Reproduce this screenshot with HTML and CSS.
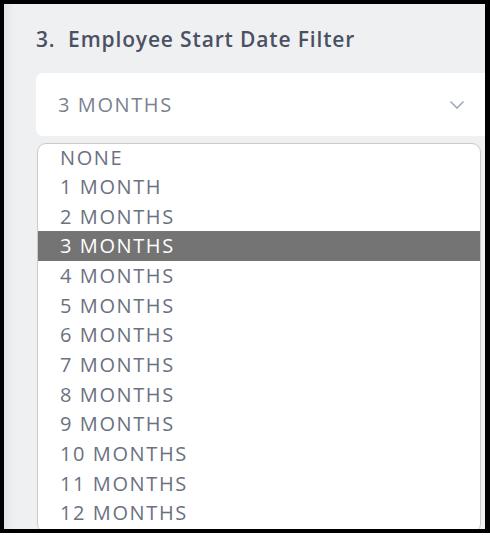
FILE: index.html
```html
<!DOCTYPE html>
<html>
<head>
<meta charset="utf-8">
<link rel="stylesheet" href="styles.css">
</head>
<body>
<div class="frame">
  <div class="panel">
    <h2 class="title">3.&nbsp; Employee Start Date Filter</h2>
    <div class="select">
      <span class="select-value">3 MONTHS</span>
      <svg class="chevron" width="16" height="10" viewBox="0 0 16 10"><path d="M1.5 1.5 L8 8 L14.5 1.5" fill="none" stroke="#a4abb8" stroke-width="1.6"/></svg>
    </div>
    <ul class="list">
      <li class="opt">NONE</li>
      <li class="opt">1 MONTH</li>
      <li class="opt">2 MONTHS</li>
      <li class="opt sel">3 MONTHS</li>
      <li class="opt">4 MONTHS</li>
      <li class="opt">5 MONTHS</li>
      <li class="opt">6 MONTHS</li>
      <li class="opt">7 MONTHS</li>
      <li class="opt">8 MONTHS</li>
      <li class="opt">9 MONTHS</li>
      <li class="opt">10 MONTHS</li>
      <li class="opt">11 MONTHS</li>
      <li class="opt">12 MONTHS</li>
    </ul>
  </div>
</div>
</body>
</html>
```

FILE: styles.css
```css
html, body {
  margin: 0;
  padding: 0;
  background: #ffffff;
}
.frame {
  box-sizing: border-box;
  width: 490px;
  height: 533px;
  border-style: solid;
  border-color: #000;
  border-width: 4px 5px 4px 4px;
  overflow: hidden;
}
.panel {
  height: 100%;
  background: linear-gradient(to right, #e2e3e5 0px, #eff0f2 10px);
  padding: 0 0 0 32px;
  box-sizing: border-box;
  font-family: "Open Sans", "Liberation Sans", sans-serif;
}
.title {
  margin: 0;
  padding-top: 22px;
  height: 46px;
  box-sizing: border-box;
  font-size: 21px;
  font-weight: 600;
  line-height: 26px;
  color: #4b5162;
  letter-spacing: 0.85px;
}
.select {
  margin-top: 23px;
  height: 63px;
  background: #fff;
  border-radius: 7px 0 0 7px;
  display: flex;
  align-items: center;
  justify-content: space-between;
  padding: 0 20px 0 22px;
  box-sizing: border-box;
}
.select-value {
  font-size: 20px;
  letter-spacing: 1.6px;
  color: #7b8190;
}
.chevron {
  display: block;
}
.list {
  list-style: none;
  margin: 7px 0 0 1px;
  padding: 0;
  width: 444px;
  background: #fff;
  border: 1px solid #c9cacc;
  border-radius: 9px;
  box-sizing: border-box;
  height: 390px;
  overflow: hidden;
}
.opt {
  height: 29.66px;
  line-height: 29.66px;
  padding-left: 22px;
  font-size: 20px;
  letter-spacing: 1.6px;
  color: #6b7181;
  white-space: nowrap;
}
.opt:first-child {
  margin-top: -1.5px;
}
.opt.sel {
  background: #747474;
  color: #ffffff;
}
```
